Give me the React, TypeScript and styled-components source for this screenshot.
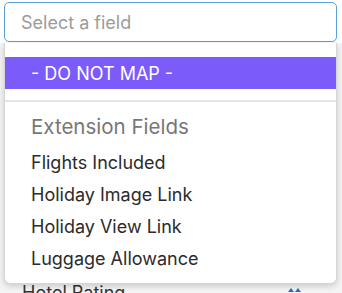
import React from "react";
import styled, { createGlobalStyle } from "styled-components";

const Global = createGlobalStyle`
  html, body { margin: 0; padding: 0; background: #ffffff; }
  body { font-family: Inter, "Liberation Sans", sans-serif; }
  * { box-sizing: border-box; }
`;

const Page = styled.div`
  position: relative;
  width: 342px;
  height: 293px;
  overflow: hidden;
  padding: 2px 5px 0 4px;
  background: #ffffff;
`;

const SelectBox = styled.div`
  height: 40px;
  border: 1px solid #5ba1d9;
  border-radius: 5px;
  display: flex;
  align-items: center;
  padding-left: 16px;
  font-size: 18px;
  color: #9b9b9b;
  background: #fff;
`;

const Underlay = styled.div`
  display: flex;
  flex-direction: column;
  padding-top: 234px;
  background: #f4f4f4;
  margin: 1px -5px 0 -4px;
`;

const FieldRow = styled.div`
  display: flex;
  align-items: center;
  justify-content: space-between;
  height: 30px;
  padding: 0 40px 0 22px;
  font-size: 18px;
  color: #333;
`;

const Menu = styled.div`
  position: absolute;
  top: 43px;
  left: 4px;
  width: 333px;
  height: 241px;
  background: #fff;
  border: 1px solid #d6d6d6;
  border-top: none;
  border-radius: 0 0 6px 6px;
  box-shadow: 0 2px 6px rgba(0, 0, 0, 0.18);
  padding-top: 14px;
  display: flex;
  flex-direction: column;
`;

const Option = styled.div<{ $active?: boolean }>`
  height: 32px;
  display: flex;
  align-items: center;
  padding-left: 26px;
  font-size: 18px;
  color: ${(p) => (p.$active ? "#ffffff" : "#2b2b2b")};
  background: ${(p) => (p.$active ? "#7b5bfa" : "transparent")};
`;

const Divider = styled.div`
  height: 2px;
  background: #e5e5e5;
  margin-top: 11px;
`;

const GroupHeader = styled.div`
  height: 44px;
  display: flex;
  align-items: center;
  padding: 4px 0 0 26px;
  font-size: 20.5px;
  color: #777777;
`;

const SortIcon = () => (
  <svg width="14" height="12" viewBox="0 0 14 12">
    <path d="M0 6 L3 2 L6 6 Z M7 6 L10 2 L13 6 Z" fill="#2a6fb8" />
  </svg>
);

export default function App() {
  return (
    <>
      <Global />
      <Page>
        <SelectBox>Select a field</SelectBox>
        <Underlay>
          <FieldRow>
            <span>Hotel Rating</span>
            <SortIcon />
          </FieldRow>
        </Underlay>
        <Menu>
          <Option $active>- DO NOT MAP -</Option>
          <Divider />
          <GroupHeader>Extension Fields</GroupHeader>
          <Option>Flights Included</Option>
          <Option>Holiday Image Link</Option>
          <Option>Holiday View Link</Option>
          <Option>Luggage Allowance</Option>
        </Menu>
      </Page>
    </>
  );
}
